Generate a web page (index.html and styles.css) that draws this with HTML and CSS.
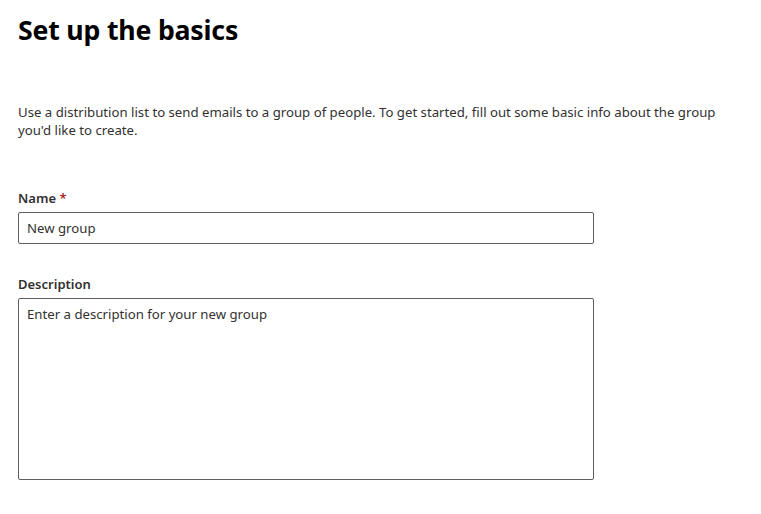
FILE: index.html
```html
<!DOCTYPE html>
<html lang="en">
<head>
<meta charset="utf-8">
<title>Set up the basics</title>
<link rel="stylesheet" href="styles.css">
</head>
<body>
<main class="page">
  <h1 class="title">Set up the basics</h1>
  <p class="intro">Use a distribution list to send emails to a group of people. To get started, fill out some basic info about the group you'd like to create.</p>
  <div class="field">
    <label class="label" for="name">Name <span class="req">*</span></label>
    <input class="input" id="name" type="text" value="New group">
  </div>
  <div class="field">
    <label class="label" for="desc">Description</label>
    <textarea class="textarea" id="desc" placeholder="Enter a description for your new group"></textarea>
  </div>
</main>
</body>
</html>
```
FILE: styles.css
```css
html, body {
  margin: 0;
  padding: 0;
  background: #ffffff;
}
body {
  font-family: "Noto Sans", "Open Sans", "Liberation Sans", sans-serif;
  color: #323130;
}
.page {
  padding: 10px 18px 0 18px;
  width: 720px;
}
.title {
  margin: 0;
  font-size: 26.7px;
  line-height: 40px;
  font-weight: 700;
  color: #000000;
  letter-spacing: -0.2px;
}
.intro {
  margin: 53px 0 0 0;
  font-size: 13.2px;
  line-height: 18px;
  color: #323130;
  max-width: 720px;
}
.field {
  margin-top: 49px;
}
.field + .field {
  margin-top: 30px;
}
.label {
  display: block;
  font-size: 13px;
  font-weight: 600;
  line-height: 20px;
  padding: 0 0 4px 0;
  color: #323130;
}
.req {
  color: #a4262c;
}
.input, .textarea {
  display: block;
  box-sizing: border-box;
  width: 576px;
  border: 1px solid #605e5c;
  border-radius: 2px;
  font-family: inherit;
  font-size: 13.2px;
  color: #323130;
  padding: 0 8px;
  background: #ffffff;
  margin: 0;
  outline: none;
}
.input {
  height: 32px;
  line-height: 30px;
}
.textarea {
  height: 182px;
  padding-top: 5px;
  resize: none;
  line-height: 20px;
}
.textarea::placeholder {
  color: #323130;
  opacity: 1;
}
```
